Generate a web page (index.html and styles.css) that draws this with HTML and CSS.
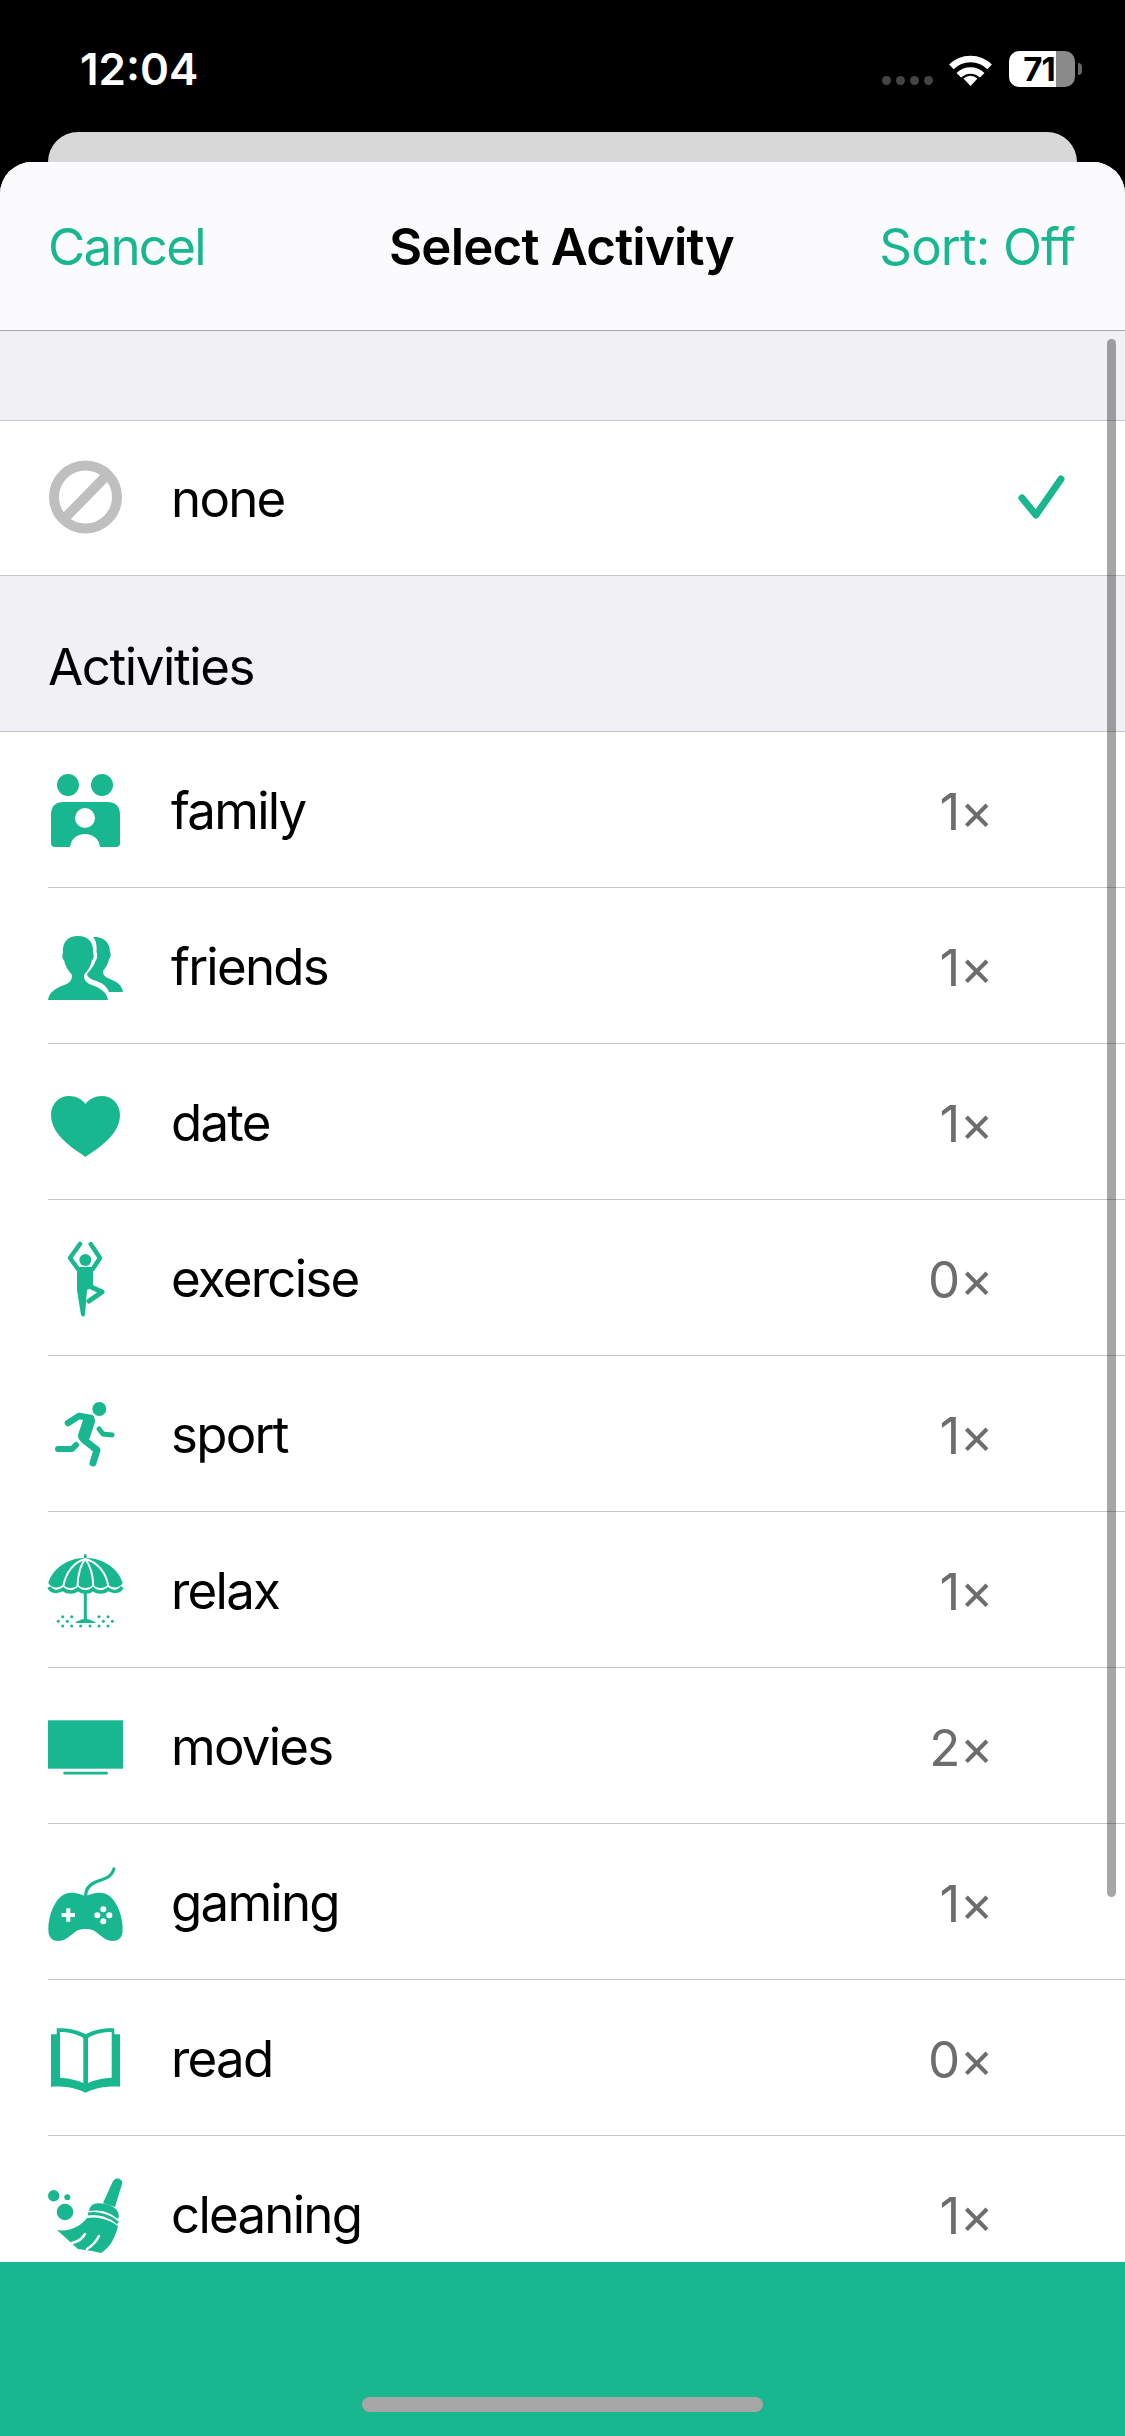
FILE: index.html
```html
<!DOCTYPE html>
<html lang="en">
<head>
    <meta charset="UTF-8">
    <meta name="viewport" content="width=device-width, initial-scale=1.0">
    <title>Select Activity</title>
    <link rel="stylesheet" href="styles.css">
</head>
<body>
    <div class="status-bar">
        <span class="time">12:04</span>
        <div class="status-icons">
            <div class="signal"><i></i><i></i><i></i><i></i></div>
            <svg class="wifi" viewBox="0 0 45 33">
                <path d="M3.4 13.9A27 27 0 0 1 41.6 13.9M10.8 22.3A16.5 16.5 0 0 1 34.2 22.3" fill="none" stroke="#fff" stroke-width="6.5"/>
                <path d="M22.5 33L15.5 25.5Q22.5 20 29.5 25.5Z" fill="#fff"/>
            </svg>
            <div class="battery">71</div>
            <div class="battery-nub"></div>
        </div>
    </div>
    <div class="back-card"></div>

    <div class="sheet">
        <div class="scrollbar"></div>
        <div class="nav">
            <span class="nav-btn">Cancel</span>
            <span class="nav-title">Select Activity</span>
            <span class="nav-btn nav-btn-right">Sort: Off</span>
        </div>

        <div class="list">
            <div class="section section-empty"></div>
            <div class="none-row">
                <svg class="row-icon" viewBox="0 0 76 76">
                    <circle cx="37.5" cy="38" r="31.5" fill="none" stroke="#bfbfbf" stroke-width="10"/>
                    <path d="M16 60L59 16" stroke="#bfbfbf" stroke-width="10"/>
                </svg>
                <span class="row-label">none</span>
                <svg class="check" viewBox="0 0 48 44">
                    <path d="M4 23L18 40L43 4" fill="none" stroke="#19b78f" stroke-width="7" stroke-linecap="round" stroke-linejoin="round"/>
                </svg>
            </div>
            <div class="section section-title">Activities</div>

            <div class="row">
                <div class="row-inner">
                    <svg class="row-icon" viewBox="0 0 76 76">
                        <circle cx="20" cy="13" r="11"/>
                        <circle cx="54" cy="13" r="11"/>
                        <path d="M16 30H59Q72 30 72 43V71Q72 75 68 75H7Q3 75 3 71V43Q3 30 16 30Z"/>
                        <circle cx="37" cy="46" r="10" fill="#fff"/>
                        <path d="M22 75C23 67 29 62 37 62C45 62 51 67 52 75Z" fill="#fff"/>
                    </svg>
                    <span class="row-label">family</span>
                    <span class="count">1×</span>
                </div>
            </div>
            <div class="row">
                <div class="row-inner">
                    <svg class="row-icon" viewBox="0 0 76 76">
                        <path d="M0 72C1 64 8 60 16 57C22 55 24 52 24 47C20 42 17 38 16 32C14 31 14 26 15 25C14 14 20 8 30 8C40 8 46 14 45 25C46 26 46 31 44 32C43 38 40 42 36 47C36 52 38 55 44 57C52 60 59 64 60 72Z"/>
                        <path d="M45 9C54 8 62 13 62 24C63 25 63 30 61 31C60 36 58 39 55 43C55 47 57 49 62 51C69 54 74 57 75 64H61C59 58 53 54 45 52C41 50 39 48 39 46C43 41 46.500 37 47.500 33C49.500 31 49.500 25 48.500 24C49 17 48 12 45 9Z"/>
                    </svg>
                    <span class="row-label">friends</span>
                    <span class="count">1×</span>
                </div>
            </div>
            <div class="row">
                <div class="row-inner">
                    <svg class="row-icon" viewBox="0 0 76 76">
                        <path d="M37.5 73C28 66 3 52 3 31C3 19 12 12 21 12C28 12 34 15 37.5 20C41 15 47 12 54 12C63 12 72 19 72 31C72 52 47 66 37.5 73Z"/>
                    </svg>
                    <span class="row-label">date</span>
                    <span class="count">1×</span>
                </div>
            </div>
            <div class="row">
                <div class="row-inner">
                    <svg class="row-icon" viewBox="0 0 76 76">
                        <circle cx="37.3" cy="20" r="6"/>
                        <path d="M32 4L22 18L30 29M42.7 4L52 18L44.7 29" fill="none" stroke="#19b78f" stroke-width="4.5" stroke-linecap="round" stroke-linejoin="round"/>
                        <path d="M29 27H45V47L39 50L37 75Q35 78 33 75L29 50Z"/>
                        <path d="M41 46L54 52L41 61" fill="none" stroke="#19b78f" stroke-width="5" stroke-linecap="round" stroke-linejoin="round"/>
                    </svg>
                    <span class="row-label">exercise</span>
                    <span class="count">0×</span>
                </div>
            </div>
            <div class="row">
                <div class="row-inner">
                    <svg class="row-icon" viewBox="0 0 76 76">
                        <circle cx="51.3" cy="13" r="7"/>
                        <g fill="none" stroke="#19b78f" stroke-linecap="round" stroke-linejoin="round">
                            <path d="M20 27L31 20L43 22" stroke-width="6.5"/>
                            <path d="M41 25L36 40" stroke-width="12"/>
                            <path d="M36 44L49 54L45 67" stroke-width="7"/>
                            <path d="M10 53H24L28 49" stroke-width="6"/>
                            <path d="M51 33L55 38L64 39" stroke-width="5"/>
                        </g>
                    </svg>
                    <span class="row-label">sport</span>
                    <span class="count">1×</span>
                </div>
            </div>
            <div class="row">
                <div class="row-inner">
                    <svg class="row-icon" viewBox="0 0 76 76">
                        <path d="M36 6V3Q37.3 1 38.6 3V6C55 6 71 17 74.7 31C72 36 65 37 60 33C56 37 49 37 45 33C41 37 34 37 30 33C26 37 19 37 15 33C10 37 3 36 .3 31C4 17 20 6 36 6Z"/>
                        <path d="M37.3 7C26 10 18 20 15.3 34M37.3 7C33 12 30 22 29.5 34M37.3 7C41 12 45 22 45.3 34M37.3 7C49 10 58 20 60.3 34" fill="none" stroke="#fff" stroke-width="2"/>
                        <path d="M1 35C3 40 10 41 15 37C19 41 26 41 30 37C34 41 41 41 45 37C49 41 56 41 60 37C65 41 72 40 74 35" fill="none" stroke="#19b78f" stroke-width="3.5"/>
                        <path d="M35.8 40H38.8V67C42 67.5 46 69 48 71H27C29 69 33 67.5 35.8 67Z"/>
                        <g class="sand">
                            <circle cx="14.7" cy="64.7" r="1.5"/><circle cx="23.7" cy="64.7" r="1.5"/><circle cx="51" cy="64.7" r="1.5"/><circle cx="60" cy="64.7" r="1.5"/>
                            <circle cx="10.3" cy="69.3" r="1.5"/><circle cx="19.3" cy="69.3" r="1.5"/><circle cx="55.3" cy="69.3" r="1.5"/><circle cx="64.3" cy="69.3" r="1.5"/>
                            <circle cx="14.7" cy="74" r="1.5"/><circle cx="23.7" cy="74" r="1.5"/><circle cx="32.7" cy="74" r="1.5"/><circle cx="42" cy="74" r="1.5"/><circle cx="51" cy="74" r="1.5"/><circle cx="60" cy="74" r="1.5"/>
                        </g>
                    </svg>
                    <span class="row-label">relax</span>
                    <span class="count">1×</span>
                </div>
            </div>
            <div class="row">
                <div class="row-inner">
                    <svg class="row-icon" viewBox="0 0 76 76">
                        <rect x="0" y="12.3" width="75" height="48.4"/>
                        <rect x="15.3" y="63.7" width="44.7" height="2.8" rx="1.2"/>
                    </svg>
                    <span class="row-label">movies</span>
                    <span class="count">2×</span>
                </div>
            </div>
            <div class="row">
                <div class="row-inner">
                    <svg class="row-icon" viewBox="0 0 76 76">
                        <path d="M37.7 33C37 25 42 20 49 17.5C57 14.5 64 13 66 4.7" fill="none" stroke="#19b78f" stroke-width="3" stroke-linecap="round"/>
                        <path d="M37.5 32C33 30.5 29 28.5 22 28.7C14 29 8 36 4 46C1 54 0 62 .5 68C1 74 5 77 10 77C17 77 22 72 27 68C31 65 35 65 37.5 65C40 65 44 65 48 68C53 72 58 77 65 77C70 77 74 74 74.5 68C75 62 74 54 71 46C67 36 61 29 53 28.7C46 28.5 42 30.5 37.5 32Z"/>
                        <path d="M13.6 51H27M20.3 44.3V57.7" stroke="#fff" stroke-width="4"/>
                        <g fill="#fff">
                            <circle cx="55.3" cy="45.3" r="3"/><circle cx="49.3" cy="51.3" r="3"/><circle cx="61.3" cy="51.3" r="3"/><circle cx="55.3" cy="57.3" r="3"/>
                        </g>
                    </svg>
                    <span class="row-label">gaming</span>
                    <span class="count">1×</span>
                </div>
            </div>
            <div class="row">
                <div class="row-inner">
                    <svg class="row-icon" viewBox="0 0 76 76">
                        <path d="M3 14.3H8.7V8.3C20 8 30 10 37.7 14.3C45 10 55 8 66.3 8.3V14.3H72V66.7C58 66 47 68 37.7 72.7C28 68 17 66 3 66.7Z"/>
                        <path d="M12 12C20 12 29 14 35.3 18V63C29 60 20 58 12 57.7ZM40 18C46 14 55 12 63.7 12V57.7C55 58 46 60 40 63Z" fill="#fff"/>
                    </svg>
                    <span class="row-label">read</span>
                    <span class="count">0×</span>
                </div>
            </div>
            <div class="row">
                <div class="row-inner">
                    <svg class="row-icon" viewBox="0 0 76 76">
                        <circle cx="5.7" cy="19.7" r="5.7"/>
                        <circle cx="19.3" cy="21.3" r="3"/>
                        <circle cx="17" cy="36" r="8.3"/>
                        <path d="M65 5Q69 0 73 4Q75 5 74 8L67 31L55 27Z"/>
                        <path d="M44 29C50 25 66 28 70 36C71 39 71 41 70 43C62 36 52 33 41 35Q41 32 44 29Z"/>
                        <path d="M40 38C50 36 62 40 70 47" fill="none" stroke="#19b78f" stroke-width="3"/>
                        <path d="M39 42C50 40 62 44 70 50C68 60 62 72 53 77L44 75L30 73L9 54C22 56 33 50 39 42Z"/>
                        <path d="M37 58C34 63 29 66 24 67M51 60C48 66 44 70 39 73" fill="none" stroke="#fff" stroke-width="2.5" stroke-linecap="round"/>
                    </svg>
                    <span class="row-label">cleaning</span>
                    <span class="count">1×</span>
                </div>
            </div>
        </div>

        <div class="footer">
            <div class="home-bar"></div>
        </div>
    </div>
</body>
</html>
```

FILE: styles.css
```css
body {
    margin: 0;
    height: 2436px;
    background-color: #000;
    font-family: Inter, "Liberation Sans", sans-serif;
    color: #000;
    display: flex;
    flex-direction: column;
    overflow: hidden;
}

/* status bar */
.status-bar {
    height: 132px;
    box-sizing: border-box;
    padding: 6px 43px 0 80px;
    display: flex;
    justify-content: space-between;
    align-items: center;
    flex-shrink: 0;
}

.time {
    color: #fff;
    font-size: 44px;
    font-weight: 600;
}

.status-icons {
    display: flex;
    align-items: center;
}

.signal {
    display: flex;
    gap: 5px;
    margin-top: 23px;
    margin-right: 15px;
}

.signal i {
    width: 9px;
    height: 9px;
    border-radius: 50%;
    background-color: #444;
}

.wifi {
    width: 45px;
    height: 33px;
    margin-right: 16px;
}

.battery {
    width: 66px;
    height: 36px;
    box-sizing: border-box;
    padding-right: 6px;
    border-radius: 10px;
    background: linear-gradient(to right, #fff 47px, #8a8a8a 47px);
    color: #000;
    font-size: 33px;
    font-weight: 700;
    line-height: 36px;
    text-align: center;
    letter-spacing: -1px;
}

.battery-nub {
    width: 4px;
    height: 12px;
    margin-left: 3px;
    border-radius: 0 6px 6px 0;
    background-color: #666;
}

/* sheet behind */
.back-card {
    height: 60px;
    margin: 0 48px -30px;
    border-radius: 30px 30px 0 0;
    background-color: #d8d8d8;
    flex-shrink: 0;
}

.sheet {
    flex: 1;
    min-height: 0;
    position: relative;
    display: flex;
    flex-direction: column;
    border-radius: 32px 32px 0 0;
    background-color: #fff;
    overflow: hidden;
}

.scrollbar {
    position: absolute;
    top: 177px;
    right: 9px;
    width: 9px;
    height: 1558px;
    border-radius: 5px;
    background-color: rgba(0, 0, 0, 0.35);
    z-index: 2;
}

.nav {
    height: 169px;
    box-sizing: border-box;
    padding: 0 50px 0 48px;
    display: grid;
    grid-template-columns: 1fr auto 1fr;
    align-items: center;
    background-color: #fbfbfd;
    border-bottom: 1px solid #a9a9ab;
    font-size: 51px;
    flex-shrink: 0;
}

.nav-btn {
    color: #19b78f;
    letter-spacing: -1.75px;
}

.nav-btn-right {
    text-align: right;
    letter-spacing: -0.9px;
}

.nav-title {
    font-weight: 600;
    letter-spacing: -0.8px;
}

/* list */
.list {
    flex: 1;
    min-height: 0;
    overflow: hidden;
}

.section {
    box-sizing: border-box;
    background-color: #f0f0f5;
    border-bottom: 1px solid #c6c6c8;
}

.section-empty {
    height: 90px;
}

.section-title {
    height: 156px;
    padding: 0 0 34px 48px;
    display: flex;
    align-items: flex-end;
    font-size: 51px;
    letter-spacing: -1.4px;
}

.none-row {
    height: 155px;
    box-sizing: border-box;
    padding: 0 0 2px 48px;
    display: flex;
    align-items: center;
    border-bottom: 1px solid #c6c6c8;
    font-size: 51px;
}

.check {
    width: 48px;
    height: 44px;
    margin-left: auto;
    margin-right: 59px;
}

.row {
    padding-left: 48px;
    font-size: 51px;
}

.row-inner {
    height: 156px;
    box-sizing: border-box;
    display: flex;
    align-items: center;
    border-bottom: 1px solid #c6c6c8;
}

.row-icon {
    width: 76px;
    height: 76px;
    margin-right: 47px;
    fill: #19b78f;
    overflow: visible;
    flex-shrink: 0;
}

.row-label {
    padding-top: 2px;
    letter-spacing: -1.75px;
}

.count {
    margin-left: auto;
    margin-right: 132px;
    padding-top: 3px;
    color: #6d6d6d;
    letter-spacing: -0.5px;
}

/* bottom bar */
.footer {
    height: 174px;
    background-color: #19b78f;
    display: flex;
    justify-content: center;
    align-items: flex-end;
    padding-bottom: 24px;
    box-sizing: border-box;
    flex-shrink: 0;
}

.home-bar {
    width: 401px;
    height: 15px;
    border-radius: 8px;
    background-color: #a6a6a6;
}
```
